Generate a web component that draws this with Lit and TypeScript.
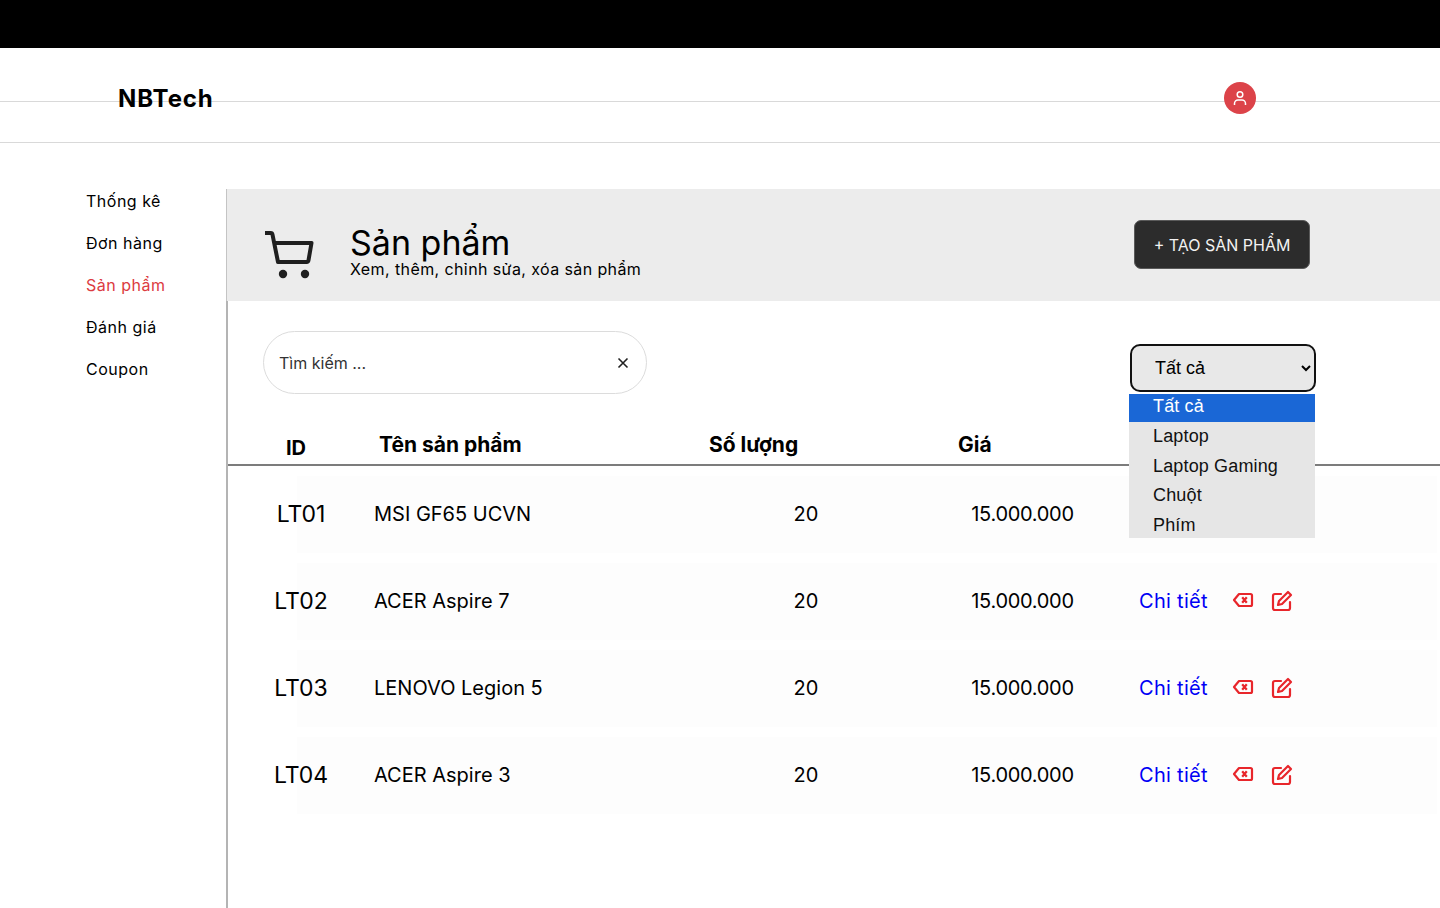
import { LitElement, html, css, svg } from 'lit';
import { customElement } from 'lit/decorators.js';

const NAV = ['Thống kê', 'Đơn hàng', 'Sản phẩm', 'Đánh giá', 'Coupon'];
const PRODUCTS = [
  { id: 'LT01', name: 'MSI GF65 UCVN' },
  { id: 'LT02', name: 'ACER Aspire 7' },
  { id: 'LT03', name: 'LENOVO Legion 5' },
  { id: 'LT04', name: 'ACER Aspire 3' },
];
const OPTIONS = ['Tất cả', 'Laptop', 'Laptop Gaming', 'Chuột', 'Phím'];

const deleteIcon = svg`<path d="M8 5h11.5a1.5 1.5 0 0 1 1.5 1.5v9a1.5 1.5 0 0 1-1.5 1.5H8l-5-6z" fill="none" stroke="currentColor" stroke-width="2.2" stroke-linejoin="round"/><path d="M11.2 8.2l4.6 5.6m0-5.6l-4.6 5.6" fill="none" stroke="currentColor" stroke-width="2.2"/>`;
const editIcon = svg`<path d="M11 5H5a2 2 0 0 0-2 2v12a2 2 0 0 0 2 2h13a2 2 0 0 0 2-2v-6" fill="none" stroke="currentColor" stroke-width="2.2" stroke-linecap="round"/><path d="M18 3l3 3-9 9-4 1 1-4z" fill="none" stroke="currentColor" stroke-width="2.2" stroke-linejoin="round"/>`;

@customElement('app-root')
export class AppRoot extends LitElement {
  static styles = css`
    :host {
      display: block;
      height: 908px;
      overflow: hidden;
      background: #fff;
      font-family: Inter, 'Liberation Sans', sans-serif;
      color: #000;
    }
    .top-strip {
      height: 48px;
      background: #000;
    }
    .topbar {
      position: relative;
      height: 95px;
      box-sizing: border-box;
      border-bottom: 1px solid #d9d9d9;
      display: flex;
      align-items: center;
      justify-content: space-between;
      padding: 0 184px 0 118px;
    }
    .topbar::before {
      content: '';
      position: absolute;
      left: 0;
      right: 0;
      top: 53px;
      height: 1px;
      background: #d9d9d9;
    }
    .logo {
      position: relative;
      font-size: 24px;
      font-weight: 700;
      letter-spacing: 0.9px;
      margin-top: 7px;
    }
    .avatar {
      position: relative;
      width: 32px;
      height: 32px;
      border-radius: 50%;
      background: #dc4349;
      display: flex;
      align-items: center;
      justify-content: center;
      margin-top: 6px;
    }
    .layout {
      display: flex;
      padding-top: 46px;
    }
    .sidebar {
      width: 226px;
      flex: none;
      box-sizing: border-box;
      padding: 1px 0 0 86px;
      display: flex;
      flex-direction: column;
      gap: 20px;
      font-size: 16px;
      line-height: 22px;
      letter-spacing: 0.5px;
    }
    .sidebar a.active {
      color: #dc3b41;
    }
    .main {
      flex: 1;
      min-width: 0;
      height: 720px;
    }
    .hero {
      height: 112px;
      box-sizing: border-box;
      background: #ececec;
      border-left: 1px solid #c4c4c4;
      display: flex;
      align-items: center;
      padding: 0 130px 0 36px;
    }
    .cart {
      margin-top: 22px;
    }
    .hero-text {
      margin: 14px 0 0 35px;
      flex: 1;
    }
    .hero h1 {
      margin: -1px 0 1px;
      font-size: 34px;
      font-weight: 400;
      line-height: 33px;
    }
    .hero p {
      margin: 0;
      font-size: 16px;
      line-height: 18px;
      letter-spacing: 0.4px;
    }
    .create {
      width: 176px;
      height: 49px;
      margin-bottom: 2px;
      padding-top: 3px;
      border: 1px solid #5a5a5a;
      border-radius: 7px;
      background: #2c2c2c;
      color: #f2f2f2;
      font: 400 16px Inter, 'Liberation Sans', sans-serif;
    }
    .body {
      border-left: 2px solid #b4b4b4;
      height: 608px;
      box-sizing: border-box;
      position: relative;
    }
    .filters {
      display: flex;
      justify-content: space-between;
      align-items: flex-start;
      padding: 30px 124px 0 35px;
      height: 131px;
      box-sizing: border-box;
    }
    .search {
      width: 384px;
      height: 63px;
      box-sizing: border-box;
      border: 1px solid #dcdcdc;
      border-radius: 32px;
      display: flex;
      align-items: center;
      justify-content: space-between;
      padding: 0 17px 0 15px;
      font-size: 16px;
      color: #333;
    }
    .search svg {
      color: #222;
    }
    .select-wrap {
      position: relative;
      margin-top: 13px;
      width: 186px;
    }
    select {
      display: block;
      width: 186px;
      height: 48px;
      box-sizing: border-box;
      border: 2px solid #111;
      border-radius: 10px;
      background: #e8e8e8;
      padding-left: 19px;
      font: 18px 'Liberation Sans', sans-serif;
      color: #000;
    }
    .menu {
      position: absolute;
      z-index: 2;
      left: -1px;
      top: 50px;
      width: 186px;
      height: 144px;
      overflow: hidden;
      background: #e6e6e6;
      font: 18px/29.5px 'Liberation Sans', sans-serif;
      letter-spacing: 0.15px;
      color: #111;
    }
    .menu div {
      padding-left: 24px;
      height: 29.5px;
    }
    .menu div.selected {
      background: #1a67d6;
      color: #fff;
      height: 28px;
      line-height: 24px;
    }
    .row {
      display: grid;
      grid-template-columns: 146px 332px 200px 233px 1fr;
      align-items: center;
    }
    .head {
      height: 34px;
      box-sizing: border-box;
      border-bottom: 2px solid #7c7c7c;
      padding-bottom: 6px;
      font-size: 21px;
      font-weight: 700;
      align-items: end;
      line-height: 26px;
    }
    .head .id-head {
      padding-left: 58px;
      margin-bottom: -3px;
      font-size: 20px;
    }
    .head .name-head {
      padding-left: 5px;
    }
    .head .qty-head {
      margin-left: 3px;
    }
    .head .price-head {
      padding-left: 52px;
    }
    .items {
      display: flex;
      flex-direction: column;
      gap: 10px;
      padding-top: 10px;
    }
    .item {
      height: 77px;
      box-sizing: border-box;
      padding-bottom: 2px;
      font-size: 20px;
      background: linear-gradient(#fdfdfd, #fdfdfd) 69px 0 / calc(100% - 72px) 100% no-repeat;
    }
    .cell-id {
      text-align: center;
      font-size: 23px;
    }
    .cell-num {
      text-align: center;
    }
    .cell-price {
      text-align: center;
      letter-spacing: -0.3px;
    }
    .actions {
      display: flex;
      align-items: center;
    }
    .detail {
      color: #0000f5;
      width: 92px;
      letter-spacing: 0.3px;
    }
    .icon {
      color: #e8262b;
      display: block;
    }
    .icon + .icon {
      margin-left: 15px;
    }
  `;

  render() {
    return html`
      <div class="top-strip"></div>
      <header class="topbar">
        <div class="logo">NBTech</div>
        <div class="avatar">
          <svg width="16" height="16" viewBox="0 0 16 16" fill="none" stroke="#fff" stroke-width="1.5">
            <circle cx="8" cy="4.5" r="2.8" />
            <path d="M2.5 15v-1.5a3.5 3.5 0 0 1 3.5-3.5h4a3.5 3.5 0 0 1 3.5 3.5V15" />
          </svg>
        </div>
      </header>
      <div class="layout">
        <nav class="sidebar">
          ${NAV.map((n) => html`<a class=${n === 'Sản phẩm' ? 'active' : ''}>${n}</a>`)}
        </nav>
        <main class="main">
          <section class="hero">
            <svg class="cart" width="52" height="50" viewBox="0 0 52 50" fill="none" stroke="#1f1f1f" stroke-width="4">
              <path d="M2 2h5.5a2 2 0 0 1 2 1.6L15 31h28.5a2 2 0 0 0 2-1.7L48.5 12H11" stroke-linejoin="round" />
              <circle cx="20" cy="43" r="4.2" fill="#1f1f1f" stroke="none" />
              <circle cx="42" cy="43" r="4.2" fill="#1f1f1f" stroke="none" />
            </svg>
            <div class="hero-text">
              <h1>Sản phẩm</h1>
              <p>Xem, thêm, chỉnh sửa, xóa sản phẩm</p>
            </div>
            <button class="create">+ TẠO SẢN PHẨM</button>
          </section>
          <section class="body">
            <div class="filters">
              <div class="search">
                <span>Tìm kiếm ...</span>
                <svg width="12" height="12" viewBox="0 0 12 12" stroke="currentColor" stroke-width="1.6">
                  <path d="M1.5 1.5l9 9m0-9l-9 9" />
                </svg>
              </div>
              <div class="select-wrap">
                <select>
                  ${OPTIONS.map((o) => html`<option>${o}</option>`)}
                </select>
                <div class="menu">
                  ${OPTIONS.map((o, i) => html`<div class=${i === 0 ? 'selected' : ''}>${o}</div>`)}
                </div>
              </div>
            </div>
            <div class="row head">
              <div class="id-head">ID</div>
              <div class="name-head">Tên sản phẩm</div>
              <div class="qty-head">Số lượng</div>
              <div class="price-head">Giá</div>
              <div></div>
            </div>
            <div class="items">
              ${PRODUCTS.map(
                (p) => html`
                  <div class="row item">
                    <div class="cell-id">${p.id}</div>
                    <div>${p.name}</div>
                    <div class="cell-num">20</div>
                    <div class="cell-price">15.000.000</div>
                    <div class="actions">
                      <a class="detail">Chi tiết</a>
                      <svg class="icon" width="24" height="24" viewBox="0 0 24 24">${deleteIcon}</svg>
                      <svg class="icon" width="24" height="24" viewBox="0 0 24 24">${editIcon}</svg>
                    </div>
                  </div>
                `,
              )}
            </div>
          </section>
        </main>
      </div>
    `;
  }
}
